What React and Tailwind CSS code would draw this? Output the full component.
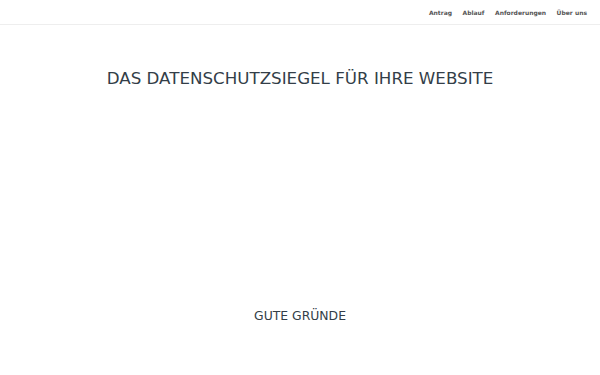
export default function App() {
  return (
    <div className="w-[600px] h-[375px] bg-white overflow-hidden" style={{fontFamily: '"DejaVu Sans", sans-serif'}}>
      <header className="h-[25px] border-b border-[#eeeeee] flex items-center justify-end pr-[13px]">
        <nav className="flex gap-[10.5px] text-[6px] font-bold text-[#555555]">
          <span>Antrag</span>
          <span>Ablauf</span>
          <span>Anforderungen</span>
          <span>Über uns</span>
        </nav>
      </header>
      <h1 className="text-center text-[16.7px] text-[#333e48] mt-[45px] leading-none">DAS DATENSCHUTZSIEGEL FÜR IHRE WEBSITE</h1>
      <h2 className="text-center text-[12.4px] text-[#333e48] mt-[223px] leading-none">GUTE GRÜNDE</h2>
    </div>
  );
}
